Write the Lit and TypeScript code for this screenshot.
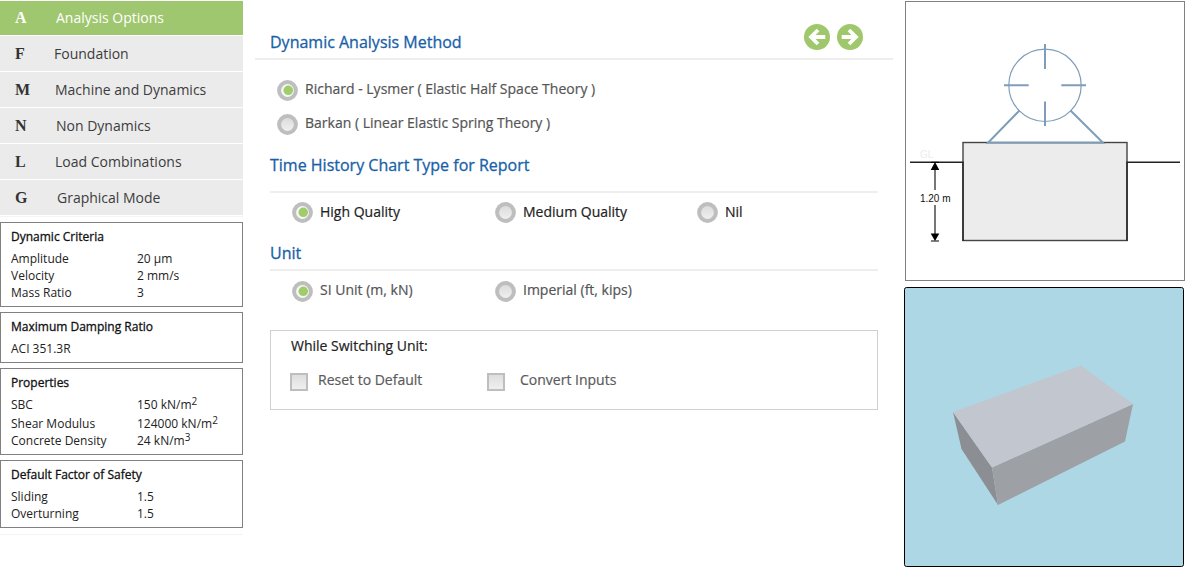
import { LitElement, html, css, svg } from "lit";
import { customElement, property } from "lit/decorators.js";
import { classMap } from "lit/directives/class-map.js";
import { styleMap } from "lit/directives/style-map.js";

@customElement("radio-option")
class RadioOption extends LitElement {
  @property({ type: Boolean }) checked = false;
  static styles = css`
    :host { display: flex; align-items: flex-start; height: 22px; }
    .dial { display: block; width: 21px; height: 21px; margin-top: var(--dial-top, 1px); flex: none; }
    .text { margin-left: 7px; line-height: 20px; white-space: pre; -webkit-text-stroke: 0.2px currentColor; }
  `;
  render() {
    return html`<svg class="dial" viewBox="0 0 22 22">
        <defs>
          <linearGradient id="g" x1="0" y1="0" x2="0" y2="1">
            <stop offset="0" stop-color="#dcdcdc" /><stop offset="1" stop-color="#efefef" />
          </linearGradient>
        </defs>
        <circle cx="11" cy="11" r="10.9" fill="#bebebe" />
        <circle cx="11" cy="11" r="6.7" fill=${this.checked ? "#f7f7f7" : "url(#g)"} />
        ${this.checked ? svg`<circle cx="11.8" cy="10.8" r="5" fill="#9fcd6c" />` : ""}
      </svg>
      <span class="text"><slot></slot></span>`;
  }
}

type Row = { label: string; value?: string; sup?: string };
type Panel = { title: string; rows: Row[] };

const MENU = [
  { key: "A", label: "Analysis Options", indent: 56, active: true },
  { key: "F", label: "Foundation", indent: 54, active: false },
  { key: "M", label: "Machine and Dynamics", indent: 55, active: false },
  { key: "N", label: "Non Dynamics", indent: 56, active: false },
  { key: "L", label: "Load Combinations", indent: 55, active: false },
  { key: "G", label: "Graphical Mode", indent: 57, active: false },
];

const PANELS: Panel[] = [
  {
    title: "Dynamic Criteria",
    rows: [
      { label: "Amplitude", value: "20 µm" },
      { label: "Velocity", value: "2 mm/s" },
      { label: "Mass Ratio", value: "3" },
    ],
  },
  { title: "Maximum Damping Ratio", rows: [{ label: "ACI 351.3R" }] },
  {
    title: "Properties",
    rows: [
      { label: "SBC", value: "150 kN/m", sup: "2" },
      { label: "Shear Modulus", value: "124000 kN/m", sup: "2" },
      { label: "Concrete Density", value: "24 kN/m", sup: "3" },
    ],
  },
  {
    title: "Default Factor of Safety",
    rows: [
      { label: "Sliding", value: "1.5" },
      { label: "Overturning", value: "1.5" },
    ],
  },
];

@customElement("app-root")
class AppRoot extends LitElement {
  static styles = css`
    :host {
      display: grid;
      grid-template-columns: 243px 639px 281px;
      column-gap: 11px;
      width: 1188px;
      height: 572px;
      box-sizing: border-box;
      overflow: hidden;
      background: #fff;
      font-family: "Open Sans", sans-serif;
      color: #222;
    }
    .side { padding-top: 1px; }
    .menu { display: flex; flex-direction: column; gap: 1px; border-bottom: 1px solid #f4f4f4; padding-bottom: 1px; }
    .item { display: grid; align-items: center; height: 35px; background: #ebebeb; color: #3c3c3c; font-size: 14px; white-space: nowrap; }
    .item.active { box-sizing: border-box; background: #9fc76f; color: #fff; height: 34px; padding-bottom: 1px; margin-bottom: 1px; }
    .item.active + .item { margin-top: -1px; height: 35px; }
    .key, .label { grid-area: 1 / 1; }
    .key { padding-left: 15px; font: bold 16px "Liberation Serif", serif; color: #333; }
    .active .key { color: #fff; }
    .panels { display: flex; flex-direction: column; gap: 5px; margin-top: 5px; padding-bottom: 6px; border-bottom: 1px solid #f4f4f4; }
    .panel { border: 1px solid #808080; padding: 5px 10px; font-size: 12px; }
    .title { line-height: 18px; color: #111; margin-bottom: 4px; white-space: nowrap; -webkit-text-stroke: 0.3px #111; }
    .row { display: grid; grid-template-columns: 126px 1fr; line-height: 17px; height: 17px; color: #222; white-space: nowrap; }
    .row.tall { height: 19px; }
    sup { font-size: 10px; line-height: 0; vertical-align: 4px; }

    .main { padding-top: 25px; font-size: 14px; }
    .top { display: flex; align-items: center; height: 33px; margin-left: 1px; padding: 0 30px 0 15px; border-bottom: 2px solid #eee; }
    .heading { font-size: 16px; line-height: 22px; color: #1761a8; -webkit-text-stroke: 0.3px #1761a8; margin: 0; font-weight: 400; white-space: nowrap; }
    .top .heading { flex: 1; }
    .nav { display: flex; gap: 7px; margin-top: -9px; }
    .nav svg { display: block; width: 26px; height: 26px; }
    .methods { display: flex; flex-direction: column; gap: 12px; padding: 19px 0 0 23px; color: #555; }
    .section { margin-left: 16px; width: 608px; }
    .chart { padding-top: 19px; }
    .chart .heading { padding-bottom: 15px; }
    .chart .options { --dial-top: 0px; }
    .unit { padding-top: 18px; }
    .unit .heading { padding-bottom: 5px; }
    .section .heading { border-bottom: 2px solid #eee; }
    .options { display: grid; grid-template-columns: 203px 202px 1fr; padding: 9px 0 0 22px; color: #222; }
    .options.muted { color: #555; }
    .box { box-sizing: border-box; margin: 28px 0 0 16px; width: 608px; height: 80px; border: 1px solid #d0d0d0; padding: 5px 0 0 19px; color: #222; }
    .caption { line-height: 20px; padding-left: 1px; -webkit-text-stroke: 0.2px currentColor; }
    .checks { display: grid; grid-template-columns: 197px 1fr; margin-top: 14px; color: #5b5b5b; }
    .check { display: flex; line-height: 20px; gap: 10px; -webkit-text-stroke: 0.2px currentColor; }
    .check.wide { gap: 15px; }
    .tick { box-sizing: border-box; width: 18px; height: 18px; margin-top: 3px; border: 2px solid #bebebe; background: linear-gradient(#dedede, #efefef); }

    .views { display: flex; flex-direction: column; gap: 6px; padding-top: 1px; }
    .views svg { display: block; }
  `;

  render() {
    return html`
      <aside class="side">
        <nav class="menu">
          ${MENU.map(
            (m) => html`<div class=${classMap({ item: true, active: m.active })}>
              <span class="key">${m.key}</span>
              <span class="label" style=${styleMap({ paddingLeft: m.indent + "px" })}>${m.label}</span>
            </div>`
          )}
        </nav>
        <div class="panels">
          ${PANELS.map(
            (p) => html`<section class="panel">
              <div class="title">${p.title}</div>
              ${p.rows.map(
                (r, i) => html`<div class=${classMap({ row: true, tall: i === 0 && !!r.sup })}>
                  <span>${r.label}</span>
                  <span>${r.value ?? ""}${r.sup ? html`<sup>${r.sup}</sup>` : ""}</span>
                </div>`
              )}
            </section>`
          )}
        </div>
      </aside>

      <main class="main">
        <div class="top">
          <h2 class="heading">Dynamic Analysis Method</h2>
          <div class="nav">
            <svg viewBox="0 0 26 26">
              <circle cx="13" cy="13" r="13" fill="#9fc76b" />
              <path d="M14 6 L7 13 L14 20 M7.4 13 H21.3" fill="none" stroke="#fff" stroke-width="3.8" />
            </svg>
            <svg viewBox="0 0 26 26">
              <circle cx="13" cy="13" r="13" fill="#9fc76b" />
              <path d="M12 6 L19 13 L12 20 M18.6 13 H4.7" fill="none" stroke="#fff" stroke-width="3.8" />
            </svg>
          </div>
        </div>
        <div class="methods">
          <radio-option checked>Richard - Lysmer ( Elastic Half Space Theory )</radio-option>
          <radio-option>Barkan ( Linear Elastic Spring Theory )</radio-option>
        </div>
        <div class="section chart">
          <h2 class="heading">Time History Chart Type for Report</h2>
          <div class="options">
            <radio-option checked>High Quality</radio-option>
            <radio-option>Medium Quality</radio-option>
            <radio-option>Nil</radio-option>
          </div>
        </div>
        <div class="section unit">
          <h2 class="heading">Unit</h2>
          <div class="options muted">
            <radio-option checked>SI Unit (m, kN)</radio-option>
            <radio-option>Imperial (ft, kips)</radio-option>
          </div>
        </div>
        <div class="box">
          <div class="caption">While Switching Unit:</div>
          <div class="checks">
            <div class="check"><span class="tick"></span>Reset to Default</div>
            <div class="check wide"><span class="tick"></span>Convert Inputs</div>
          </div>
        </div>
      </main>

      <div class="views">
        <svg width="281" height="280" viewBox="904 1 281 280">
          <rect x="905.5" y="1.5" width="279" height="279" fill="#fff" stroke="#808080" />
          <rect x="963" y="142.5" width="164" height="98" fill="#ececec" stroke="#444" stroke-width="1.4" />
          <path d="M910 162.3 H963 V241 M1180 162.3 H1127 V241" fill="none" stroke="#222" stroke-width="1.4" />
          <g fill="none" stroke="#7f9db9">
            <circle cx="1045" cy="85.3" r="36.2" stroke-width="1.2" />
            <path d="M1045 44 V69 M1045 101.5 V126 M1004 85.3 H1028.7 M1061.3 85.3 H1086" stroke-width="2" />
            <path d="M1019.5 110.5 L988 142.7 H1103 L1070.5 110.5" stroke-width="2" />
          </g>
          <text x="920" y="158" font-family="Liberation Sans, sans-serif" font-size="10" fill="#ececec">GL</text>
          <path d="M935 165 V190 M935 205 V238" stroke="#555" stroke-width="1.6" />
          <path d="M935 162 L939.3 170 H930.7 Z M935 241 L939.3 233.5 H930.7 Z" fill="#000" />
          <path d="M931 162.3 H939 M931 241 H939" stroke="#000" />
          <text x="920" y="202" font-family="Liberation Sans, sans-serif" font-size="10" fill="#111" textLength="30.5">1.20 m</text>
        </svg>
        <svg width="281" height="280" viewBox="904 287 281 280">
          <rect x="904.5" y="287.5" width="279" height="279" rx="2" fill="#aed7e5" stroke="#000" />
          <path d="M953 412 L992 467.5 L998 505 L961.5 449 Z" fill="#8b8f93" />
          <path d="M992 467.5 L1133 404 L1125 441.5 L998 505 Z" fill="#9da1a5" />
          <path d="M953 412 L1081 365.5 L1133 404 L992 467.5 Z" fill="#c2c6ce" />
        </svg>
      </div>
    `;
  }
}
